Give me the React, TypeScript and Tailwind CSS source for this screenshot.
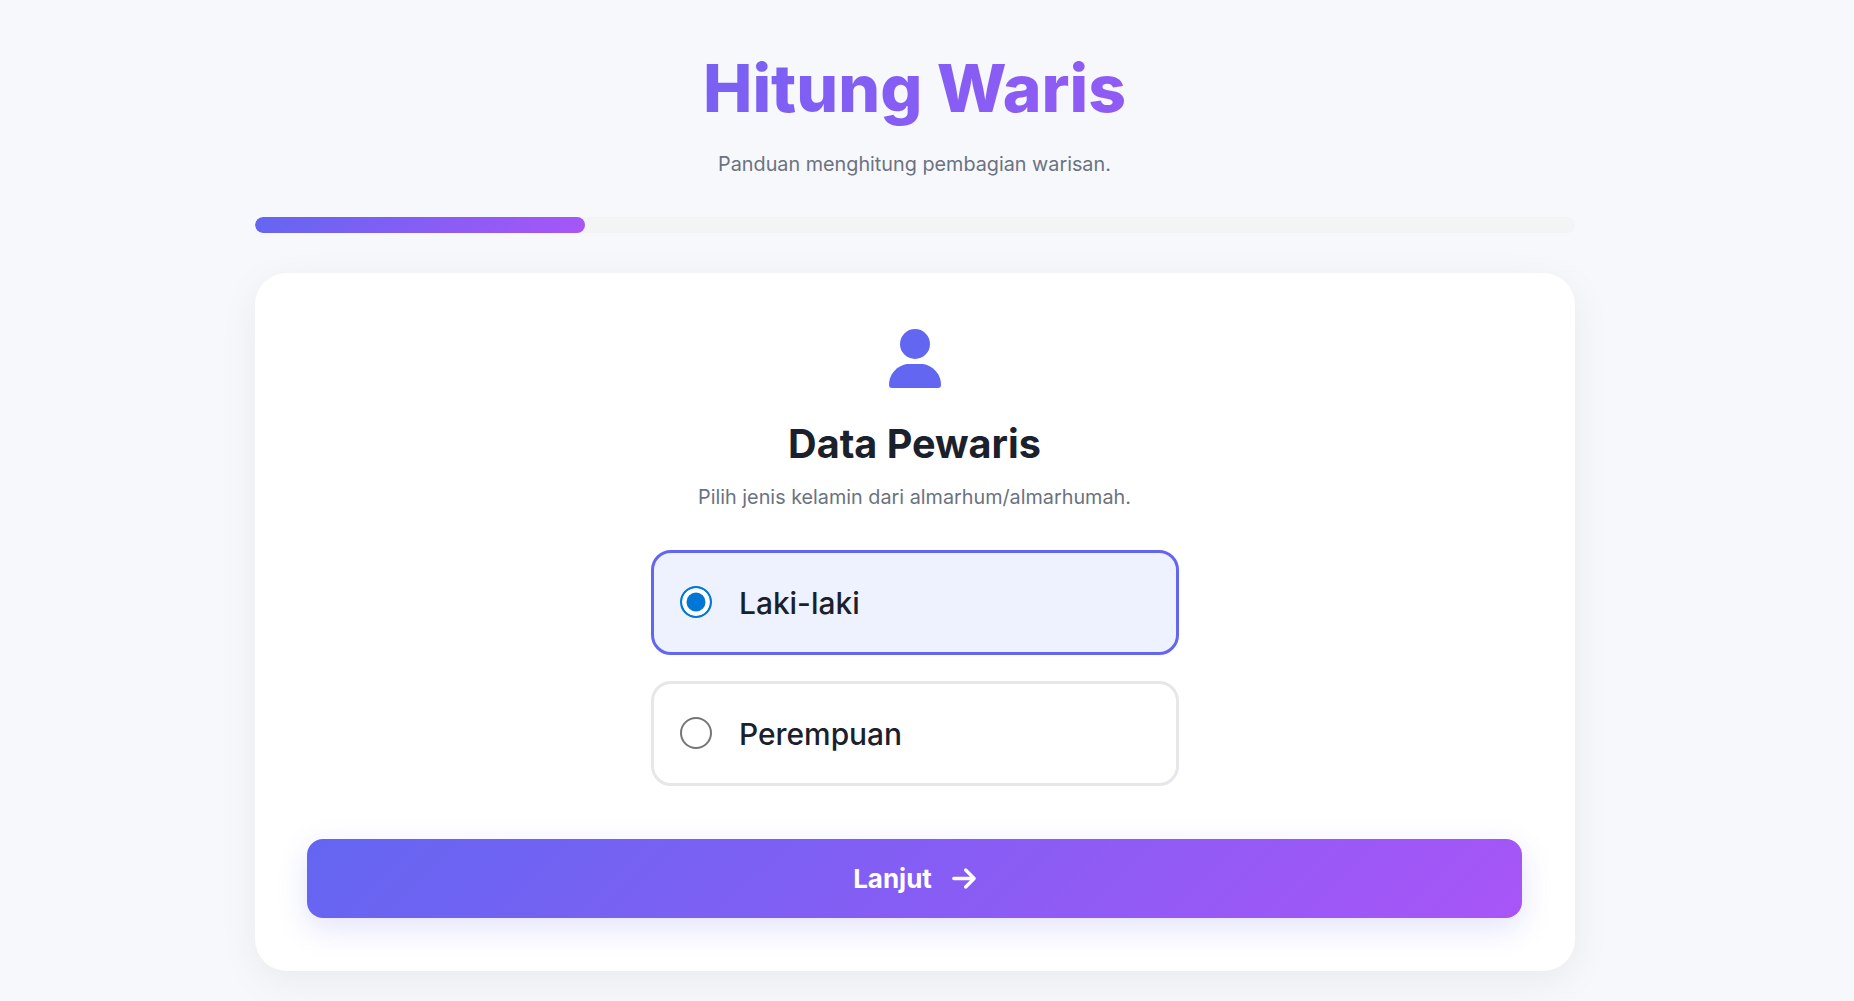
import { useState } from "react";
import { FaArrowRight } from "react-icons/fa6";

const options = ["Laki-laki", "Perempuan"];

function PersonIcon() {
  return (
    <svg viewBox="0 0 52 59" className="h-[59px] w-[52px] fill-[#6366f1]">
      <circle cx="26" cy="15" r="15" />
      <path d="M0 56C0 43 11 35 20 35h12c9 0 20 8 20 21 0 2-1 3-3 3H3c-2 0-3-1-3-3Z" />
    </svg>
  );
}

export default function App() {
  const [gender, setGender] = useState("Laki-laki");

  return (
    <div className="min-h-[1001px] overflow-hidden bg-[#f7f8fc] pr-[24px] font-['Inter',sans-serif] text-[#1a202c]">
      <div className="mx-auto w-[1320px] pt-[48px]">
        <h1 className="bg-[linear-gradient(135deg,#6366f1,#a855f7)] bg-clip-text pr-[1px] text-center text-[66px] leading-[80px] font-extrabold text-transparent">
          Hitung Waris
        </h1>
        <p className="mt-[21px] pr-[1px] text-center text-[19.800px] leading-[30px] text-[#6b7280]">
          Panduan menghitung pembagian warisan.
        </p>

        <div className="mt-[38px] h-[16px] overflow-hidden rounded-full bg-[#f3f4f6]">
          <div className="h-full w-1/4 rounded-full bg-[linear-gradient(135deg,#6366f1,#a855f7)]" />
        </div>

        <div className="mt-[40px] flex h-[698px] flex-col items-center rounded-[32px] bg-white pt-[56px] pr-[53px] pl-[52px] shadow-[0_10px_40px_rgba(0,0,0,0.06)]">
          <PersonIcon />
          <h2 className="mt-[30px] text-[39.600px] leading-[52px] font-bold">Data Pewaris</h2>
          <p className="mt-[12px] text-[19.800px] leading-[30px] text-[#6b7280]">
            Pilih jenis kelamin dari almarhum/almarhumah.
          </p>

          <div className="mt-[38px] flex w-[528px] flex-col gap-[26px]">
            {options.map((option) => {
              const active = gender === option;
              return (
                <label
                  key={option}
                  className={`flex h-[105px] cursor-pointer items-center rounded-[20px] border-[3px] px-[26px] ${
                    active ? "border-[#6366f1] bg-[#eef2ff]" : "border-[#e5e7eb] bg-white"
                  }`}
                >
                  <input
                    type="radio"
                    name="gender"
                    checked={active}
                    onChange={() => setGender(option)}
                    className="m-0 mb-[2px] h-[32px] w-[32px] appearance-none rounded-full border-2 border-[#767676] bg-white checked:border-[#0077d6] checked:bg-[#0077d6] checked:shadow-[inset_0_0_0_4.5px_#ffffff]"
                  />
                  <span className="ml-[27.500px] text-[29.900px] leading-[40px] font-medium">{option}</span>
                </label>
              );
            })}
          </div>

          <button className="mt-[53px] flex h-[79px] w-full items-center justify-center gap-[20px] rounded-[16px] bg-[linear-gradient(135deg,#6366f1,#a855f7)] text-[26px] font-bold text-white shadow-[0_10px_30px_rgba(99,102,241,0.18)]">
            Lanjut
            <FaArrowRight className="h-[27px] w-[24px]" />
          </button>
        </div>
      </div>
    </div>
  );
}
